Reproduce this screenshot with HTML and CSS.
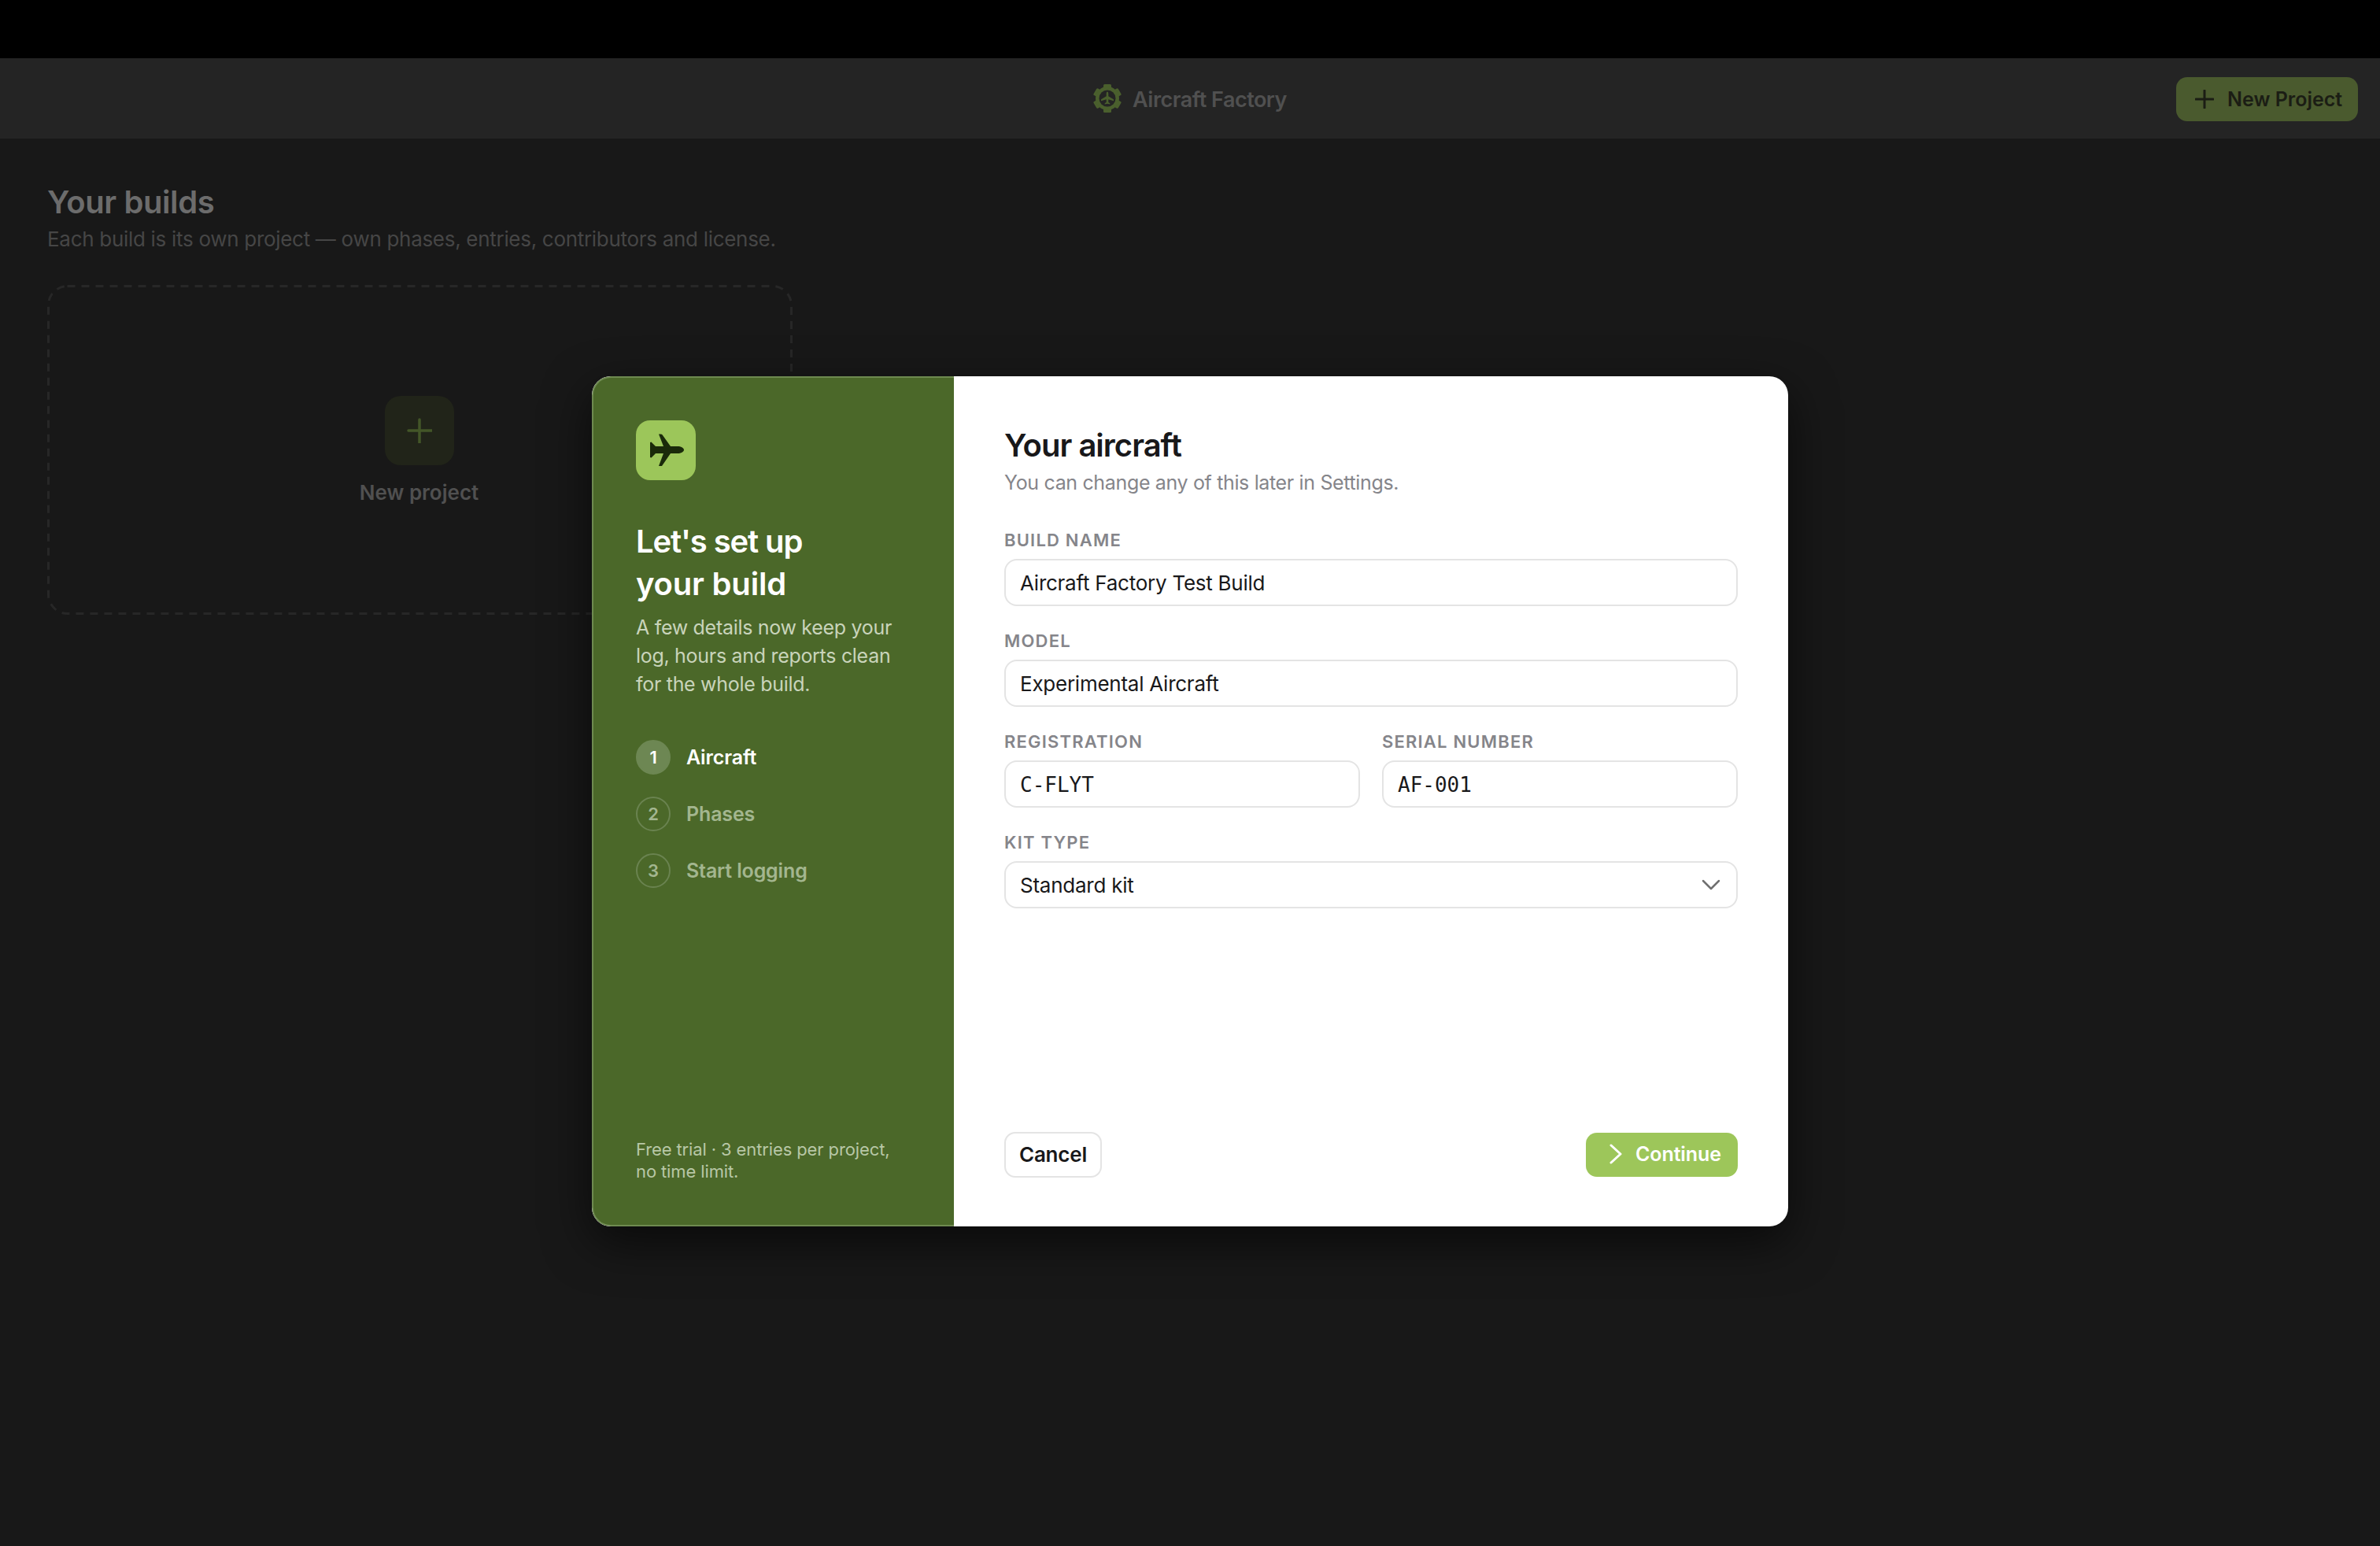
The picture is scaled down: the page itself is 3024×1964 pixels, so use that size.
FILE: index.html
```html
<!DOCTYPE html>
<html lang="en">
<head>
    <meta charset="UTF-8">
    <title>Aircraft Factory</title>
    <link rel="stylesheet" href="styles.css">
</head>
<body>
    <div class="top-strip"></div>
    <header class="app-header">
        <div class="brand">
            <svg class="brand-logo" viewBox="0 0 36 36">
                <g fill="#4a5f2d">
                    <rect x="13" y="0" width="10" height="36" rx="1.5"/>
                    <rect x="13" y="0" width="10" height="36" rx="1.5" transform="rotate(60 18 18)"/>
                    <rect x="13" y="0" width="10" height="36" rx="1.5" transform="rotate(120 18 18)"/>
                    <circle cx="18" cy="18" r="15"/>
                </g>
                <circle cx="18" cy="18" r="10.5" fill="#242424"/>
                <path fill="#4a5f2d" d="M18 9.5c.9 0 1.3 1.3 1.3 2.6v3.2l6.7 4v2l-6.7-2v3.4l2 1.5v1.3l-3.3-.8-3.3.8v-1.3l2-1.5v-3.4l-6.7 2v-2l6.7-4v-3.2c0-1.3.4-2.6 1.3-2.6z"/>
            </svg>
            <span class="brand-name">Aircraft Factory</span>
        </div>
        <button class="new-project-btn">
            <svg class="btn-icon" viewBox="0 0 24 24"><path d="M12 1v22M1 12h22"/></svg>
            New Project
        </button>
    </header>

    <main class="builds">
        <h1>Your builds</h1>
        <p class="builds-sub">Each build is its own project — own phases, entries, contributors and license.</p>
        <div class="new-card">
            <svg class="new-card-dash" viewBox="0 0 947 419"><rect x="1.500" y="1.500" width="944" height="416" rx="24"/></svg>
            <div class="new-card-icon">
                <svg viewBox="0 0 32 32"><path d="M16 2v30M2 16h30"/></svg>
            </div>
            <div class="new-card-label">New project</div>
        </div>
    </main>

    <div class="overlay">
        <div class="modal">
            <aside class="side">
                <div class="side-icon">
                    <svg viewBox="0 0 48 48"><path d="M47 23.5C47 26 43 28 39 28H30L19.500 43.200C19 44 18 44.300 15 44L21 28H11L5.500 33.500L4 33V14L5.500 13.500L11 19H21L15 3.500C18 3.200 19 3.500 19.500 4.300L30 19H39C43 19 47 21 47 23.500Z"/></svg>
                </div>
                <h2 class="side-title"><span class="side-title-first">Let's set up</span><br>your build</h2>
                <p class="side-desc">A few details now keep your log, hours and reports clean for the whole build.</p>
                <ol class="steps">
                    <li class="step active"><span class="step-num">1</span>Aircraft</li>
                    <li class="step"><span class="step-num">2</span>Phases</li>
                    <li class="step"><span class="step-num">3</span>Start logging</li>
                </ol>
                <p class="side-foot">Free trial · 3 entries per project,<br>no time limit.</p>
            </aside>
            <section class="form-pane">
                <h2 class="form-title">Your aircraft</h2>
                <p class="form-sub">You can change any of this later in Settings.</p>
                <div class="fields">
                    <div class="field">
                        <label>Build name</label>
                        <div class="input">Aircraft Factory Test Build</div>
                    </div>
                    <div class="field">
                        <label>Model</label>
                        <div class="input">Experimental Aircraft</div>
                    </div>
                    <div class="field-row">
                        <div class="field">
                            <label>Registration</label>
                            <div class="input mono">C-FLYT</div>
                        </div>
                        <div class="field">
                            <label>Serial number</label>
                            <div class="input mono">AF-001</div>
                        </div>
                    </div>
                    <div class="field">
                        <label>Kit type</label>
                        <div class="input select">
                            Standard kit
                            <svg class="chevron" viewBox="0 0 24 14"><path d="M2 2l10 10L22 2"/></svg>
                        </div>
                    </div>
                </div>
                <div class="form-actions">
                    <button class="cancel-btn">Cancel</button>
                    <button class="continue-btn">
                        <svg class="btn-icon" viewBox="0 0 16 26"><path d="M2 2l12 11L2 24"/></svg>
                        Continue
                    </button>
                </div>
            </section>
        </div>
    </div>
</body>
</html>
```

FILE: styles.css
```css
* {
    box-sizing: border-box;
}

html, body {
    height: 100%;
}

body {
    margin: 0;
    background: #181818;
    font-family: Inter, "Liberation Sans", sans-serif;
    overflow: hidden;
}

button {
    font-family: inherit;
    border: none;
}

.top-strip {
    height: 74px;
    background: #000;
}

.app-header {
    position: relative;
    height: 102px;
    background: #242424;
    display: flex;
    align-items: center;
    justify-content: center;
}

.brand {
    display: flex;
    align-items: center;
    gap: 14px;
}

.brand-logo {
    width: 36px;
    height: 36px;
}

.brand-name {
    padding-top: 2px;
    font-size: 27px;
    font-weight: 600;
    letter-spacing: -0.5px;
    color: #505050;
}

.new-project-btn {
    position: absolute;
    top: 24px;
    right: 28px;
    width: 231px;
    height: 56px;
    border-radius: 14px;
    background: #4a5a2e;
    color: #1b1d14;
    font-size: 25px;
    font-weight: 600;
    display: flex;
    align-items: center;
    gap: 17px;
    padding: 0 0 0 24px;
}

.btn-icon {
    flex: none;
    fill: none;
    stroke: currentColor;
    stroke-width: 3;
    stroke-linecap: round;
    stroke-linejoin: round;
}

.new-project-btn .btn-icon {
    width: 24px;
    height: 24px;
}

.builds {
    padding: 56px 60px 0;
}

.builds h1 {
    margin: 0;
    font-size: 40px;
    line-height: 50px;
    font-weight: 600;
    letter-spacing: -0.4px;
    color: #6c6c6c;
}

.builds-sub {
    margin: 2px 0 0;
    font-size: 26px;
    line-height: 40px;
    letter-spacing: -0.3px;
    color: #464646;
}

.new-card {
    position: relative;
    margin-top: 38px;
    width: 947px;
    height: 419px;
    display: flex;
    flex-direction: column;
    align-items: center;
    padding: 141px 2px 0 0;
}

.new-card-dash {
    position: absolute;
    top: 0;
    left: 0;
    width: 100%;
    height: 100%;
    fill: none;
    stroke: #272727;
    stroke-width: 3;
    stroke-dasharray: 10 8;
}

.new-card-icon {
    width: 88px;
    height: 88px;
    border-radius: 20px;
    background: #212419;
    display: flex;
    align-items: center;
    justify-content: center;
}

.new-card-icon svg {
    width: 32px;
    height: 32px;
    fill: none;
    stroke: #435628;
    stroke-width: 3.5;
    stroke-linecap: round;
}

.new-card-label {
    margin-top: 17px;
    font-size: 26px;
    line-height: 36px;
    font-weight: 600;
    color: #505050;
}

.overlay {
    position: absolute;
    top: 74px;
    left: 0;
    right: 0;
    bottom: 2px;
    display: flex;
    align-items: center;
    justify-content: center;
}

.modal {
    width: 1520px;
    height: 1080px;
    display: flex;
    border-radius: 24px;
    overflow: hidden;
    background: #fff;
    box-shadow: 0 20px 60px rgba(0, 0, 0, 0.6);
}

.side {
    width: 460px;
    flex: none;
    display: flex;
    flex-direction: column;
    padding: 54px 54px 54px;
    background: #4b6829;
    color: #fff;
    border: 2px solid #6e8a50;
    border-right: none;
    border-radius: 24px 0 0 24px;
}

.side-icon {
    width: 76px;
    height: 76px;
    border-radius: 18px;
    background: #9cc65a;
    display: flex;
    align-items: center;
    justify-content: center;
}

.side-icon svg {
    width: 48px;
    height: 48px;
    fill: #1a2a0a;
}

.side-title {
    margin: 51px 0 0;
    font-size: 40px;
    line-height: 54px;
    font-weight: 600;
    letter-spacing: -0.2px;
}

.side-title-first {
    letter-spacing: -1.1px;
}

.side-desc {
    margin: 10px 0 0;
    font-size: 25px;
    line-height: 36px;
    letter-spacing: -0.3px;
    color: #c9d4bb;
}

.steps {
    list-style: none;
    margin: 53px 0 0;
    padding: 0;
    display: flex;
    flex-direction: column;
    gap: 28px;
}

.step {
    display: flex;
    align-items: center;
    gap: 20px;
    height: 44px;
    font-size: 25px;
    font-weight: 600;
    letter-spacing: -0.15px;
    color: #a3b68f;
}

.step-num {
    width: 44px;
    height: 44px;
    border-radius: 50%;
    border: 2px solid #6a8350;
    display: flex;
    align-items: center;
    justify-content: center;
    font-size: 22px;
}

.step.active {
    color: #fff;
}

.step.active .step-num {
    background: #6d8753;
    border-color: #6d8753;
}

.side-foot {
    margin: auto 0 0;
    font-size: 22px;
    line-height: 28px;
    letter-spacing: -0.12px;
    color: #b8c7a6;
}

.form-pane {
    flex: 1;
    display: flex;
    flex-direction: column;
    padding: 64px 64px 62px;
}

.form-title {
    margin: 0;
    font-size: 40px;
    line-height: 48px;
    font-weight: 600;
    letter-spacing: -1px;
    color: #18181a;
}

.form-sub {
    margin: 5px 0 0;
    font-size: 25px;
    line-height: 36px;
    letter-spacing: -0.35px;
    color: #85858a;
}

.fields {
    margin-top: 41px;
    display: flex;
    flex-direction: column;
    gap: 30px;
}

.field-row {
    display: grid;
    grid-template-columns: 1fr 1fr;
    gap: 28px;
}

.field label {
    display: block;
    font-size: 22px;
    line-height: 28px;
    font-weight: 600;
    text-transform: uppercase;
    letter-spacing: 1.2px;
    color: #85858a;
}

.input {
    margin-top: 10px;
    height: 60px;
    border: 2px solid #e4e4e4;
    border-radius: 16px;
    padding: 0 18px;
    display: flex;
    align-items: center;
    font-size: 26px;
    letter-spacing: -0.25px;
    color: #18181a;
}

.input.mono {
    padding-top: 2px;
    font-family: "DejaVu Sans Mono", "Liberation Mono", monospace;
    letter-spacing: 0;
}

.input.select {
    justify-content: space-between;
}

.chevron {
    width: 24px;
    height: 14px;
    margin-right: 2px;
    fill: none;
    stroke: #707070;
    stroke-width: 2.5;
    stroke-linecap: round;
    stroke-linejoin: round;
}

.form-actions {
    margin-top: auto;
    display: flex;
    justify-content: space-between;
    align-items: center;
}

.cancel-btn {
    width: 124px;
    height: 58px;
    padding: 0 0 2px;
    background: #fff;
    border: 2px solid #e4e4e4;
    border-radius: 14px;
    font-size: 26px;
    font-weight: 600;
    letter-spacing: -0.2px;
    color: #18181a;
}

.continue-btn {
    width: 193px;
    height: 56px;
    background: #9dc65a;
    border-radius: 14px;
    color: #fff;
    font-size: 25px;
    font-weight: 600;
    letter-spacing: -0.1px;
    display: flex;
    align-items: center;
    gap: 17px;
    padding: 0 0 2px 30px;
}

.continue-btn .btn-icon {
    width: 16px;
    height: 26px;
}
```
